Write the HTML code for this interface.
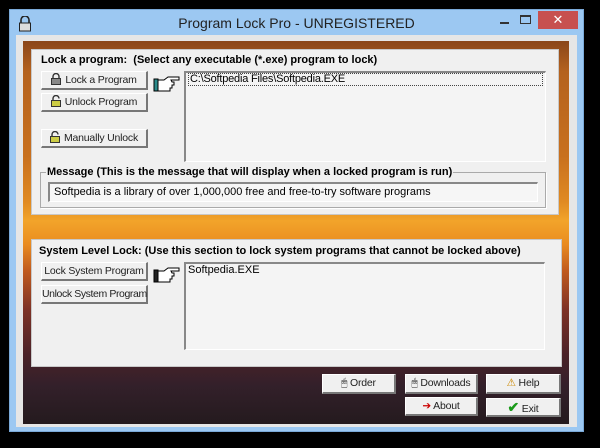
<!DOCTYPE html>
<html><head><meta charset="utf-8"><style>
*{margin:0;padding:0;box-sizing:border-box}
body{width:600px;height:448px;background:#000;position:relative;overflow:hidden;font-family:"Liberation Sans",Arial,sans-serif;font-size:11px;color:#000}
.abs{position:absolute}
#win{left:9px;top:9px;width:575px;height:423px;background:#9cc8f2;border:1px solid #7aa9d8}
#title{left:0;top:0;width:100%;height:26px;text-align:center;font-size:14px;line-height:26px;color:#222}
#client{left:16px;top:35px;width:561px;height:392px;background:#e6e6e6}
#img{left:23px;top:41px;width:546px;height:383px;background:linear-gradient(180deg,#8a461a 0%,#b4621e 8%,#c8701e 30%,#e08a22 42%,#f2a42a 47%,#ea8c20 53%,#c05a1e 60%,#7e3226 70%,#4a2228 82%,#33202a 90%,#241a1e 100%)}
.panel{background:#f0f0f0;border:1px solid #c8c8c8}
.btn{position:absolute;background:#f0f0f0;border-top:1px solid #fff;border-left:1px solid #fff;border-right:2px solid #777;border-bottom:2px solid #777;text-align:center;font-size:10.5px;line-height:16px;color:#222;white-space:nowrap;letter-spacing:-0.2px}
.list{position:absolute;background:#f4f4f4;border-top:2px solid #888;border-left:2px solid #888;border-right:1px solid #fff;border-bottom:1px solid #fff}
b{font-weight:bold}
.lk{display:inline-block;width:10px;height:12px;vertical-align:-2px;margin-right:4px}
</style></head><body>
<div id="win" class="abs">
 <div id="title" class="abs">Program Lock Pro - UNREGISTERED</div>
 <svg class="abs" style="left:8px;top:6px" width="14" height="16" viewBox="0 0 14 16"><path d="M3 7V4a4 4 0 0 1 8 0v3" fill="none" stroke="#222" stroke-width="1.6"/><rect x="1.5" y="7" width="11" height="8" fill="#ddd" stroke="#222"/></svg>
 <div class="abs" style="left:490px;top:12px;width:9px;height:2px;background:#333"></div>
 <div class="abs" style="left:510px;top:5px;width:11px;height:9px;border:1px solid #333;border-top-width:2px"></div>
 <div class="abs" style="left:528px;top:1px;width:40px;height:18px;background:#c7504f;color:#fff;text-align:center;font-size:13px;line-height:18px">✕</div>
</div>
<div id="client" class="abs"></div>
<div id="img" class="abs"></div>

<div class="abs panel" style="left:31px;top:49px;width:528px;height:166px"></div>
<div class="abs" style="left:41px;top:54px;font-size:11px"><b>Lock a program:&nbsp; (Select any executable (*.exe) program to lock)</b></div>
<div class="btn" style="left:41px;top:71px;width:107px;height:19px"><svg class="lk" viewBox="0 0 10 12"><path d="M2 6V3.5a3 3 0 0 1 6 0V6" fill="none" stroke="#333" stroke-width="1.4"/><rect x="0.5" y="5.5" width="9" height="6" fill="#888" stroke="#333"/></svg>Lock a Program</div>
<div class="btn" style="left:41px;top:93px;width:107px;height:19px"><svg class="lk" viewBox="0 0 10 12"><path d="M2 6V3.5a3 3 0 0 1 6 0" fill="none" stroke="#333" stroke-width="1.4"/><rect x="0.5" y="5.5" width="9" height="6" fill="#cc4" stroke="#333"/></svg>Unlock Program</div>
<div class="btn" style="left:41px;top:129px;width:107px;height:19px"><svg class="lk" viewBox="0 0 10 12"><path d="M2 6V3.5a3 3 0 0 1 6 0" fill="none" stroke="#333" stroke-width="1.4"/><rect x="0.5" y="5.5" width="9" height="6" fill="#cc4" stroke="#333"/></svg>Manually Unlock</div>
<svg class="abs" style="left:153px;top:75px" width="28" height="18" viewBox="0 0 28 18"><rect x="1" y="4" width="4" height="12" fill="#2a8a8a" stroke="#000"/><path d="M5 5h6l4-3h11v3h-8l1 2h2v3h-2v3h-2v3H5z" fill="#fff" stroke="#000"/></svg>
<div class="list" style="left:184px;top:71px;width:362px;height:91px"><div style="margin:0 2px;border:1px dotted #444;line-height:11px;padding-left:1px;letter-spacing:-0.2px">C:\Softpedia Files\Softpedia.EXE</div></div>
<div class="abs" style="left:40px;top:172px;width:506px;height:36px;border:1px solid #aaa;box-shadow:1px 1px 0 #fff"></div>
<div class="abs" style="left:46px;top:166px;background:#f0f0f0;padding:0 1px"><b>Message (This is the message that will display when a locked program is run)</b></div>
<div class="list" style="left:48px;top:182px;width:490px;height:20px;line-height:17px;padding-left:4px;background:#f6f6f6">Softpedia is a library of over 1,000,000 free and free-to-try software programs</div>

<div class="abs panel" style="left:31px;top:239px;width:531px;height:128px"></div>
<div class="abs" style="left:39px;top:245px"><b>System Level Lock: (Use this section to lock system programs that cannot be locked above)</b></div>
<div class="btn" style="left:41px;top:262px;width:107px;height:19px">Lock System Program</div>
<div class="btn" style="left:41px;top:285px;width:107px;height:19px;letter-spacing:-0.4px">Unlock System Program</div>
<svg class="abs" style="left:153px;top:266px" width="28" height="18" viewBox="0 0 28 18"><rect x="1" y="4" width="4" height="12" fill="#222" stroke="#000"/><path d="M5 5h6l4-3h11v3h-8l1 2h2v3h-2v3h-2v3H5z" fill="#fff" stroke="#000"/></svg>
<div class="list" style="left:184px;top:262px;width:361px;height:88px;padding-left:2px;line-height:12px">Softpedia.EXE</div>

<div class="btn" style="left:322px;top:374px;width:74px;height:20px;line-height:17px">🖱 Order</div>
<div class="btn" style="left:405px;top:374px;width:73px;height:20px;line-height:17px">🖱 Downloads</div>
<div class="btn" style="left:486px;top:374px;width:75px;height:20px;line-height:17px"><span style="color:#c80">⚠</span> Help</div>
<div class="btn" style="left:405px;top:397px;width:73px;height:19px;line-height:16px"><span style="color:#c00">➔</span> About</div>
<div class="btn" style="left:486px;top:398px;width:75px;height:19px;line-height:16px"><span style="color:#1a9a1a;font-weight:bold;font-size:14px">✔</span> Exit</div>
</body></html>
